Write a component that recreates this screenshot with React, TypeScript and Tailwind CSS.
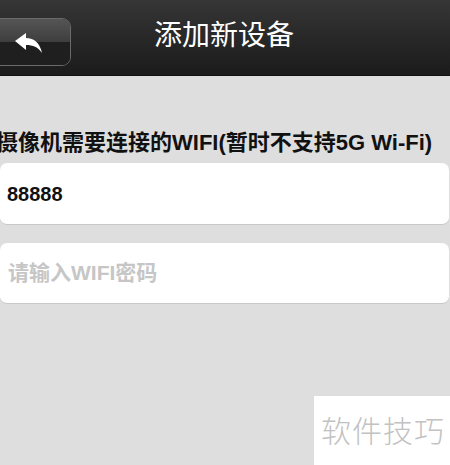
import React from "react";

export default function App() {
  return (
    <div
      className="relative w-[450px] h-[465px] overflow-hidden bg-[#dedede]"
      style={{ fontFamily: '"Liberation Sans","Noto Sans CJK SC",sans-serif' }}
    >
      <header className="relative h-[76px] bg-gradient-to-b from-[#363636] to-[#1b1b1b] border-b border-[#111] flex items-center justify-center">
        <div className="absolute left-[-12px] top-[18px] w-[83px] h-[48px] rounded-[9px] border border-[#6a6a6a] overflow-hidden flex flex-col">
          <div className="h-1/2 bg-gradient-to-b from-[#555] to-[#3e3e3e]" />
          <div className="h-1/2 bg-[#1f1f1f]" />
          <svg
            className="absolute left-[24px] top-[13px]"
            width="32"
            height="24"
            viewBox="0 0 32 24"
          >
            <path
              d="M2 9 L13 1 L13 6 C21 6 27 11 29 21 C25 15 20 13 13 13 L13 18 Z"
              fill="#ffffff"
            />
          </svg>
        </div>
        <h1 className="text-[28px] leading-none text-white font-normal ml-[-2px] mt-[-4px]">
          添加新设备
        </h1>
      </header>

      <div className="absolute top-[131px] left-[-4px] whitespace-nowrap text-[22px] leading-[24px] font-bold text-[#111]">
        摄像机需要连接的WIFI(暂时不支持5G Wi-Fi)
      </div>

      <div className="pt-[87px] flex flex-col">
        <div className="h-[62px] bg-white rounded-[7px] border-b border-[#c8c8c8] flex items-center px-[7px] mr-[1px]">
          <span className="text-[20px] font-bold text-[#111]">88888</span>
        </div>
        <div className="mt-[18px] h-[61px] bg-white rounded-[7px] border-b border-[#c8c8c8] flex items-center px-[8px] mr-[1px]">
          <span className="text-[21px] text-[#c6c6c6] font-bold">请输入WIFI密码</span>
        </div>
      </div>

      <div className="absolute left-[314px] top-[396px] right-0 bottom-0 bg-white flex items-start pl-[7px] pt-[19px]">
        <span className="text-[30px] leading-[34px] text-[#c2c2c2] font-light tracking-[1px]">软件技巧</span>
      </div>
    </div>
  );
}
